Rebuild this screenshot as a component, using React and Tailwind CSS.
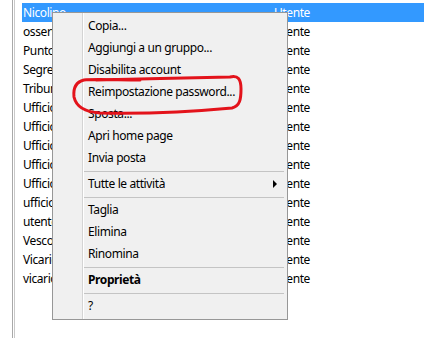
import React from 'react';

const rows = [
  'Nicolino',
  'osservatorio',
  'Punto informativo',
  'Segreteria',
  'Tribunale',
  'Ufficio amministrativo',
  'Ufficio catechistico',
  'Ufficio liturgico',
  'Ufficio missionario',
  'Ufficio pastorale',
  'ufficio tecnico',
  'utente generico',
  'Vescovo',
  'Vicario generale',
  'vicario episcopale',
];

const menu = [
  { label: 'Copia...' },
  { label: 'Aggiungi a un gruppo...' },
  { label: 'Disabilita account' },
  { label: 'Reimpostazione password...' },
  { label: 'Sposta...' },
  { label: 'Apri home page' },
  { label: 'Invia posta' },
  { sep: true },
  { label: 'Tutte le attività', sub: true },
  { sep: true },
  { label: 'Taglia' },
  { label: 'Elimina' },
  { label: 'Rinomina' },
  { sep: true },
  { label: 'Proprietà', bold: true },
  { sep: true },
  { label: '?' },
];

function ContextMenu() {
  return (
    <div className="absolute left-[52px] top-[12px] w-[236px] h-[308px] bg-[#f0f0f0] border border-[#979797] p-[2px]">
      <div className="absolute left-[29px] top-0 bottom-0 w-px bg-[#d4d4d4]" />
      <div className="absolute left-[30px] top-0 bottom-0 w-px bg-white" />
      {menu.map((m, i) =>
        m.sep ? (
          <div key={i} className="h-[4px] pl-[28px] pr-[1px] flex items-center">
            <div className="h-px w-full bg-[#c4c4c4]" />
          </div>
        ) : (
          <div key={i} className="relative h-[22px] flex items-center pl-[33px]">
            <span className={m.bold ? 'font-bold' : ''}>{m.label}</span>
            {m.sub && (
              <svg className="absolute left-[218px] top-[7px]" width="5" height="8" viewBox="0 0 5 8">
                <path d="M0 0 L4 4 L0 8 Z" fill="#000" />
              </svg>
            )}
          </div>
        )
      )}
    </div>
  );
}

export default function App() {
  return (
    <div
      className="relative w-[424px] h-[338px] bg-white overflow-hidden text-[12px] tracking-[-0.4px] text-black"
      style={{ fontFamily: '"Noto Sans", "DejaVu Sans", sans-serif' }}
    >
      <div className="ml-[12px] h-full border-l border-[#a9a9a9] pl-px">
        <div className="h-full border-l border-[#c9c9c9] pl-[7px] pt-[3px]">
          {rows.map((r, i) => (
            <div
              key={i}
              className={
                'flex h-[19px] items-center ' + (i === 0 ? 'bg-[#3399ff] text-white' : '')
              }
            >
              <div className="w-[251px] pl-[1px] whitespace-nowrap overflow-hidden">{r}</div>
              <div className="pl-[1px]">Utente</div>
            </div>
          ))}
        </div>
      </div>
      <ContextMenu />
      <svg className="absolute left-0 top-0" width="424" height="338" viewBox="0 0 424 338">
        <path
          d="M96 80 C130 79 200 78 230 77 C238 75 241 79 241 89 C241 99 240 106 232 108 C200 111 150 114 100 113 C84 112 76 106 74 97 C73 88 76 82 84 80 C92 79 120 80 140 80"
          fill="none"
          stroke="#e3131b"
          strokeWidth="3"
          strokeLinecap="round"
          strokeLinejoin="round"
        />
      </svg>
    </div>
  );
}
